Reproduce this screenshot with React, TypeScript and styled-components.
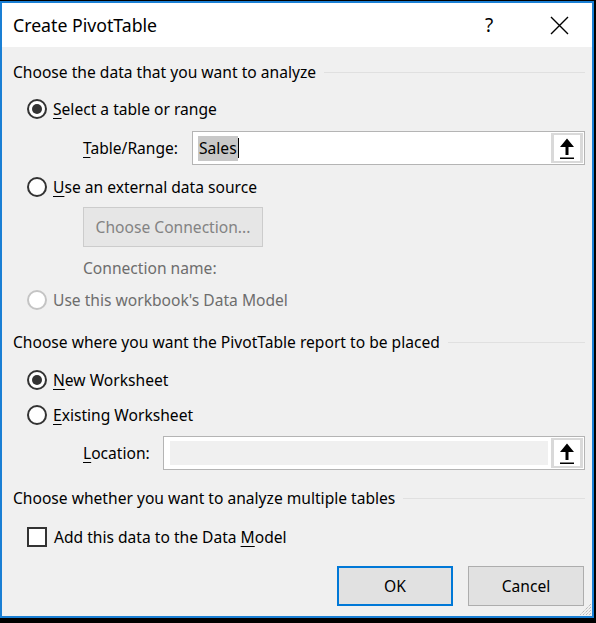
import React from "react";
import styled, {createGlobalStyle} from "styled-components";

const GlobalStyle = createGlobalStyle`
    html, body {
        margin: 0;
        padding: 0;
        background: #000;
    }
    body {
        padding: 1px 2px 5px 0;
        font-family: "Noto Sans", "Open Sans", "DejaVu Sans", sans-serif;
        color: #000;
    }
`;

const Frame = styled.div`
    position: relative;
    border: 2px solid #1a7fd4;
    display: flex;
    flex-direction: column;
    background: #f0f0f0;
`;

const TitleBar = styled.div`
    height: 44px;
    background: #fff;
    display: flex;
    align-items: center;
    padding-left: 11px;
`;

const Title = styled.div`
    flex: 1;
    font-size: 17.7px;
    color: #000;
`;

const TitleButton = styled.div`
    width: 40px;
    height: 44px;
    display: flex;
    align-items: center;
    justify-content: center;
    font-size: 19px;
    margin-right: ${({$mr}: {$mr: number}) => $mr}px;
`;

const Body = styled.div`
    display: flex;
    flex-direction: column;
    padding: 0 7px 10px 11px;
    height: 569px;
    box-sizing: border-box;
`;

const Row = styled.div`
    display: flex;
    align-items: center;
    height: ${({$h}: {$h: number, $top: number, $indent?: number}) => $h}px;
    margin-top: ${({$top}) => $top}px;
    padding-left: ${({$indent}) => $indent || 0}px;
    font-size: 15.6px;
`;

const SectionTitle = styled.span`
    white-space: nowrap;
`;

const Rule = styled.span`
    flex: 1;
    height: 1px;
    background: #e0e0e0;
    margin: 0 0 0 8px;
`;

const RadioCircle = styled.span`
    width: 20px;
    height: 20px;
    box-sizing: border-box;
    border-radius: 50%;
    border: 2px solid ${({$disabled}: {$disabled?: boolean, $checked?: boolean}) => $disabled ? "#c4c4c4" : "#333"};
    background: #fff;
    display: flex;
    align-items: center;
    justify-content: center;
    margin-right: 6px;
    flex-shrink: 0;
    &::after {
        content: "";
        width: 10px;
        height: 10px;
        border-radius: 50%;
        background: #333;
        display: ${({$checked}) => $checked ? "block" : "none"};
    }
`;

const CheckBox = styled.span`
    width: 20px;
    height: 20px;
    box-sizing: border-box;
    border: 2px solid #333;
    background: #fff;
    margin-right: 7px;
    flex-shrink: 0;
`;

const Label = styled.span`
    color: ${({$disabled}: {$disabled?: boolean}) => $disabled ? "#6d6d6d" : "#000"};
    white-space: nowrap;
`;

const Key = styled.u`
    text-decoration: underline;
    text-underline-offset: 3px;
    text-decoration-thickness: 1px;
`;

const FieldLabel = styled.span`
    width: ${({$w}: {$w: number}) => $w}px;
    white-space: nowrap;
`;

const RefBox = styled.div`
    flex: 1;
    height: 34px;
    box-sizing: border-box;
    border: 1px solid #b4b4b4;
    background: #fff;
    display: flex;
    align-items: stretch;
`;

const RefText = styled.div`
    flex: 1;
    display: flex;
    align-items: center;
    padding-left: 5px;
    font-size: 15.6px;
`;

const DisabledFill = styled.div`
    flex: 1;
    margin: 4px 3px 4px 6px;
    background: #f0f0f0;
`;

const Selected = styled.span`
    background: #c8c8c8;
    padding: 1px 1px 2px 1px;
    color: #000;
`;

const Caret = styled.span`
    display: inline-block;
    width: 1px;
    height: 20px;
    background: #000;
    vertical-align: middle;
`;

const RefButton = styled.div`
    width: 32px;
    margin: 1px 1px 1px 0;
    box-sizing: border-box;
    background: #d9d9d9;
    padding: 2px 3px;
    display: flex;
`;

const RefButtonInner = styled.div`
    flex: 1;
    background: #fff;
    display: flex;
    align-items: center;
    justify-content: center;
`;

const PushButton = styled.div`
    width: ${({$w}: {$w: number, $primary?: boolean, $disabled?: boolean}) => $w}px;
    height: 40px;
    box-sizing: border-box;
    background: ${({$disabled}) => $disabled ? "#e6e6e6" : "#e1e1e1"};
    border: ${({$primary, $disabled}) => $primary ? "2px solid #0078d7" : $disabled ? "1px solid #cccccc" : "1px solid #adadad"};
    display: flex;
    align-items: center;
    justify-content: center;
    color: ${({$disabled}) => $disabled ? "#838383" : "#000"};
    font-size: 15.6px;
`;

const ButtonBar = styled.div`
    display: flex;
    justify-content: flex-end;
    gap: 15px;
    margin-top: 17px;
    padding-right: 1px;
`;

const Grip = styled.svg`
    position: absolute;
    right: 0;
    bottom: 0;
`;

function UpArrow() {
    return <svg width="18" height="24" viewBox="0 0 18 24">
        <path d="M9 2.5 L2 11 H7.5 V19 H10.5 V11 H16 Z" fill="#000"/>
        <rect x="2" y="21.5" width="14" height="1.5" fill="#000"/>
    </svg>;
}

function RefInput({value, disabled}: {value?: string, disabled?: boolean}) {
    return <RefBox>
        {disabled ? <DisabledFill/> : <RefText><Selected>{value}</Selected><Caret/></RefText>}
        <RefButton><RefButtonInner><UpArrow/></RefButtonInner></RefButton>
    </RefBox>;
}

function Section({text, top}: {text: string, top: number}) {
    return <Row $h={24} $top={top}>
        <SectionTitle>{text}</SectionTitle>
        <Rule/>
    </Row>;
}

function Radio({checked, disabled, top, children}: {checked?: boolean, disabled?: boolean, top: number, children: React.ReactNode}) {
    return <Row $h={24} $top={top} $indent={14}>
        <RadioCircle $checked={checked} $disabled={disabled}/>
        <Label $disabled={disabled}>{children}</Label>
    </Row>;
}

export default function App() {
    return <>
        <GlobalStyle/>
        <Frame>
            <TitleBar>
                <Title>Create PivotTable</Title>
                <TitleButton $mr={30}>?</TitleButton>
                <TitleButton $mr={13}>
                    <svg width="19" height="19" viewBox="0 0 19 19">
                        <path d="M1 1 L18 18 M18 1 L1 18" stroke="#000" strokeWidth="1.4"/>
                    </svg>
                </TitleButton>
            </TitleBar>
            <Body>
                <Section text="Choose the data that you want to analyze" top={13}/>
                <Radio checked top={13}><Key>S</Key>elect a table or range</Radio>
                <Row $h={34} $top={10} $indent={70}>
                    <FieldLabel $w={109}><Key>T</Key>able/Range:</FieldLabel>
                    <RefInput value="Sales"/>
                </Row>
                <Radio top={10}><Key>U</Key>se an external data source</Radio>
                <Row $h={40} $top={8} $indent={70}>
                    <PushButton $w={180} $disabled>Choose Connection...</PushButton>
                </Row>
                <Row $h={22} $top={10} $indent={70}>
                    <Label $disabled>Connection name:</Label>
                </Row>
                <Radio disabled top={9}>Use this workbook's Data Model</Radio>
                <Section text="Choose where you want the PivotTable report to be placed" top={18}/>
                <Radio checked top={14}><Key>N</Key>ew Worksheet</Radio>
                <Radio top={11}><Key>E</Key>xisting Worksheet</Radio>
                <Row $h={34} $top={9} $indent={70}>
                    <FieldLabel $w={80}><Key>L</Key>ocation:</FieldLabel>
                    <RefInput disabled/>
                </Row>
                <Section text="Choose whether you want to analyze multiple tables" top={16}/>
                <Row $h={24} $top={15} $indent={14}>
                    <CheckBox/>
                    <Label>Add this data to the Data <Key>M</Key>odel</Label>
                </Row>
                <ButtonBar>
                    <PushButton $w={116} $primary>OK</PushButton>
                    <PushButton $w={116}>Cancel</PushButton>
                </ButtonBar>
            </Body>
            <Grip width="12" height="12" viewBox="0 0 12 12">
                <path d="M11 3 L3 11 M11 6 L6 11 M11 9 L9 11 M11 0 L0 11" stroke="#a0a0a0" strokeWidth="1" strokeDasharray="1 1"/>
            </Grip>
        </Frame>
    </>;
}
